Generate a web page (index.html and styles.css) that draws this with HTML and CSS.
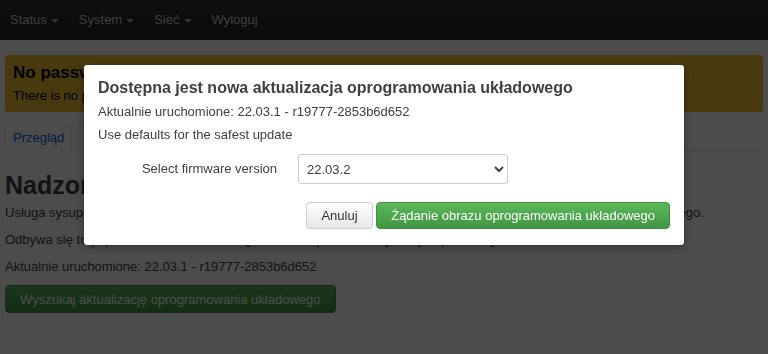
FILE: index.html
```html
<!DOCTYPE html>
<html lang="pl">
<head>
    <meta charset="UTF-8">
    <meta name="viewport" content="width=device-width, initial-scale=1.0">
    <title>Attended Sysupgrade</title>
    <link rel="stylesheet" href="styles.css">
</head>
<body>

    <header class="navbar">
        <ul class="nav">
            <li><a href="#">Status<span class="caret"></span></a></li>
            <li><a href="#">System<span class="caret"></span></a></li>
            <li><a href="#">Sieć<span class="caret"></span></a></li>
            <li><a href="#">Wyloguj</a></li>
        </ul>
    </header>

    <div id="maincontent">
        <div class="alert-message warning">
            <h4>No password set!</h4>
            <p>There is no password set on this router. Please configure a root password to protect the web interface.</p>
        </div>

        <ul class="tabmenu">
            <li class="active"><a href="#">Przegląd</a></li>
            <li><a href="#">Konfiguracja</a></li>
        </ul>

        <h2>Nadzorowana aktualizacja systemu</h2>
        <p>Usługa sysupgrade umożliwia łatwą aktualizację oryginalnych i niestandardowych obrazów oprogramowania układowego.</p>
        <p>Odbywa się to poprzez zbudowanie nowego obrazu z pakietami wybranymi przez użytkownika.</p>
        <p>Aktualnie uruchomione: 22.03.1 - r19777-2853b6d652</p>
        <button class="btn btn-success">Wyszukaj aktualizację oprogramowania układowego</button>
    </div>

    <div class="modal-backdrop">
        <div class="modal">
            <h4>Dostępna jest nowa aktualizacja oprogramowania układowego</h4>
            <p>Aktualnie uruchomione: 22.03.1 - r19777-2853b6d652</p>
            <p>Use defaults for the safest update</p>
            <div class="cbi-value">
                <label class="cbi-value-title" for="version">Select firmware version</label>
                <select id="version" class="cbi-input-select">
                    <option>22.03.2</option>
                    <option>22.03.1</option>
                    <option>SNAPSHOT</option>
                </select>
            </div>
            <div class="modal-footer">
                <button class="btn">Anuluj</button>
                <button class="btn btn-success">Żądanie obrazu oprogramowania układowego</button>
            </div>
        </div>
    </div>

</body>
</html>
```

FILE: styles.css
```css
body{
    margin: 0;
    font-family: "Liberation Sans", Arial, sans-serif;
    font-size: 13px;
    line-height: 18px;
    color: #404040;
    background-color: #fff;
}

/* top bar */
.navbar{
    height: 40px;
    background: linear-gradient(#333, #222);
}
.nav{
    display: flex;
    margin: 0;
    padding: 0;
    list-style: none;
}
.nav a{
    display: block;
    padding: 0 10px;
    line-height: 40px;
    color: #ccc;
    text-decoration: none;
}
.caret{
    display: inline-block;
    margin-left: 4px;
    vertical-align: middle;
    border-top: 4px solid #aaa;
    border-left: 4px solid transparent;
    border-right: 4px solid transparent;
}

#maincontent{
    padding: 15px 5px 0;
}

.alert-message{
    padding: 8px 8px 7px;
    border-radius: 4px;
    color: #000;
}
.alert-message.warning{
    background-color: #f2c431;
}
.alert-message h4{
    margin: 0 0 4px;
    font-size: 17px;
    line-height: 20px;
}
.alert-message p{
    margin: 0;
}

/* tabs */
.tabmenu{
    display: flex;
    gap: 5px;
    margin: 13px 0 18px;
    padding: 0;
    list-style: none;
    border-bottom: 1px solid #ddd;
}
.tabmenu li{
    margin-bottom: -1px;
}
.tabmenu a{
    display: block;
    padding: 0 7px;
    line-height: 24px;
    color: #0069d6;
    text-decoration: none;
    border: 1px solid #ddd;
    border-bottom-color: #fff;
    border-radius: 4px 4px 0 0;
}

h2{
    margin: 0 0 3px;
    font-size: 25px;
    line-height: 32px;
    color: #404040;
}
p{
    margin: 0 0 9px;
}

.btn{
    height: 28px;
    padding: 0 14px;
    font-family: inherit;
    font-size: 13px;
    color: #333;
    background: linear-gradient(#fff, #e6e6e6);
    border: 1px solid #ccc;
    border-radius: 4px;
}
.btn-success{
    color: #fff;
    background: linear-gradient(#5cb85c, #419641);
    border-color: #3e8f3e;
}

/* dialog */
.modal-backdrop{
    position: fixed;
    inset: 0;
    background-color: rgba(0, 0, 0, 0.7);
}
.modal{
    width: 600px;
    box-sizing: border-box;
    margin: 65px auto 0;
    padding: 12px 14px 16px;
    background-color: #fff;
    border-radius: 3px;
    box-shadow: 0 2px 8px rgba(0, 0, 0, 0.4);
}
.modal h4{
    margin: 0 0 4px;
    font-size: 16px;
    line-height: 22px;
    color: #404040;
}
.modal p{
    margin: 0 0 5px;
}
.cbi-value{
    display: flex;
    align-items: center;
    margin-top: 10px;
}
.cbi-value-title{
    width: 179px;
    text-align: right;
}
.cbi-input-select{
    width: 210px;
    height: 30px;
    margin-left: 21px;
    padding: 0 4px;
    font-family: inherit;
    font-size: 13px;
    color: #404040;
    background-color: #fff;
    border: 1px solid #ccc;
    border-radius: 3px;
}
.modal-footer{
    margin-top: 18px;
    text-align: right;
}
.modal-footer .btn{
    height: 27px;
}
```
